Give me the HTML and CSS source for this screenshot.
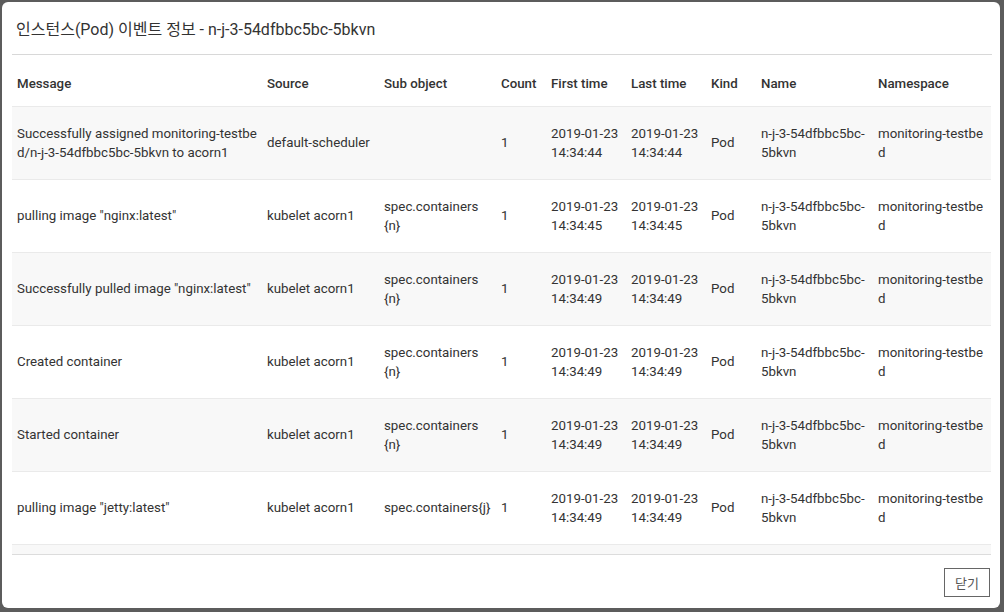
FILE: index.html
```html
<!DOCTYPE html>
<html lang="ko">
<head>
<meta charset="utf-8">
<link rel="stylesheet" href="styles.css">
</head>
<body>
<div class="modal">
  <div class="modal-header">인스턴스(Pod) 이벤트 정보 - n-j-3-54dfbbc5bc-5bkvn</div>
  <div class="modal-body">
    <div class="scroll">
      <table class="events">
        <colgroup>
          <col class="c-msg"><col class="c-src"><col class="c-sub"><col class="c-cnt"><col class="c-time"><col class="c-time"><col class="c-kind"><col class="c-name"><col class="c-ns">
        </colgroup>
        <thead>
          <tr><th>Message</th><th>Source</th><th>Sub object</th><th>Count</th><th>First time</th><th>Last time</th><th>Kind</th><th>Name</th><th>Namespace</th></tr>
        </thead>
        <tbody>
          <tr class="odd"><td class="brk">Successfully assigned monitoring-testbed/n-j-3-54dfbbc5bc-5bkvn to acorn1</td><td>default-scheduler</td><td></td><td>1</td><td>2019-01-23<br>14:34:44</td><td>2019-01-23<br>14:34:44</td><td>Pod</td><td>n-j-3-54dfbbc5bc-<br>5bkvn</td><td>monitoring-testbe<br>d</td></tr>
          <tr><td>pulling image "nginx:latest"</td><td>kubelet acorn1</td><td>spec.containers<br>{n}</td><td>1</td><td>2019-01-23<br>14:34:45</td><td>2019-01-23<br>14:34:45</td><td>Pod</td><td>n-j-3-54dfbbc5bc-<br>5bkvn</td><td>monitoring-testbe<br>d</td></tr>
          <tr class="odd"><td>Successfully pulled image "nginx:latest"</td><td>kubelet acorn1</td><td>spec.containers<br>{n}</td><td>1</td><td>2019-01-23<br>14:34:49</td><td>2019-01-23<br>14:34:49</td><td>Pod</td><td>n-j-3-54dfbbc5bc-<br>5bkvn</td><td>monitoring-testbe<br>d</td></tr>
          <tr><td>Created container</td><td>kubelet acorn1</td><td>spec.containers<br>{n}</td><td>1</td><td>2019-01-23<br>14:34:49</td><td>2019-01-23<br>14:34:49</td><td>Pod</td><td>n-j-3-54dfbbc5bc-<br>5bkvn</td><td>monitoring-testbe<br>d</td></tr>
          <tr class="odd"><td>Started container</td><td>kubelet acorn1</td><td>spec.containers<br>{n}</td><td>1</td><td>2019-01-23<br>14:34:49</td><td>2019-01-23<br>14:34:49</td><td>Pod</td><td>n-j-3-54dfbbc5bc-<br>5bkvn</td><td>monitoring-testbe<br>d</td></tr>
          <tr><td>pulling image "jetty:latest"</td><td>kubelet acorn1</td><td>spec.containers{j}</td><td>1</td><td>2019-01-23<br>14:34:49</td><td>2019-01-23<br>14:34:49</td><td>Pod</td><td>n-j-3-54dfbbc5bc-<br>5bkvn</td><td>monitoring-testbe<br>d</td></tr>
          <tr class="odd"><td></td><td></td><td></td><td></td><td></td><td></td><td></td><td></td><td></td></tr>
        </tbody>
      </table>
    </div>
  </div>
  <div class="modal-footer">
    <button class="btn-close">닫기</button>
  </div>
</div>
</body>
</html>
```
FILE: styles.css
```css
html, body {
  margin: 0;
  padding: 0;
  background: #5c5c5c;
  width: 1004px;
  height: 612px;
  overflow: hidden;
}
body {
  font-family: Roboto, "Noto Sans CJK KR", sans-serif;
  color: #333;
  padding: 2px 4px 4px 2px;
  box-sizing: border-box;
}
.modal {
  background: #fff;
  border-radius: 6px;
  width: 998px;
  height: 606px;
  display: flex;
  flex-direction: column;
  overflow: hidden;
}
.modal-header {
  height: 52px;
  margin: 0 8px 0 10px;
  padding-left: 4px;
  display: flex;
  align-items: center;
  font-size: 16px;
  color: #333;
  border-bottom: 1px solid #d8d8d8;
  box-sizing: content-box;
}
.modal-body {
  padding: 0 9px 0 10px;
}
.scroll {
  height: 499px;
  overflow: hidden;
  border-bottom: 1px solid #dcdcdc;
}
.events {
  width: 979px;
  border-collapse: collapse;
  table-layout: fixed;
  font-size: 13.3px;
  line-height: 19px;
}
.c-msg { width: 250px; }
.c-src { width: 117px; }
.c-sub { width: 117px; }
.c-cnt { width: 50px; }
.c-time { width: 80px; }
.c-kind { width: 50px; }
.c-name { width: 117px; }
.c-ns { width: 118px; }
.events th {
  text-align: left;
  font-weight: 500;
  color: #333;
  height: 51px;
  padding: 0 5px 13px;
  vertical-align: bottom;
  white-space: nowrap;
  box-sizing: border-box;
}
.events td {
  height: 73px;
  padding: 0 5px;
  vertical-align: middle;
  border-top: 1px solid #eaeaea;
  color: #333;
  box-sizing: border-box;
}
.events tr.odd td {
  background: #f8f8f8;
}
.events td.brk {
  word-break: break-all;
}
.modal-footer {
  flex: 1;
  display: flex;
  justify-content: flex-end;
  align-items: center;
  padding-right: 10px;
}
.btn-close {
  font-family: "Noto Sans CJK KR", sans-serif;
  font-size: 13px;
  color: #555;
  background: #fff;
  border: 1px solid #666;
  border-radius: 0;
  width: 46px;
  height: 29px;
  padding: 0;
  margin-top: 2px;
}
```
